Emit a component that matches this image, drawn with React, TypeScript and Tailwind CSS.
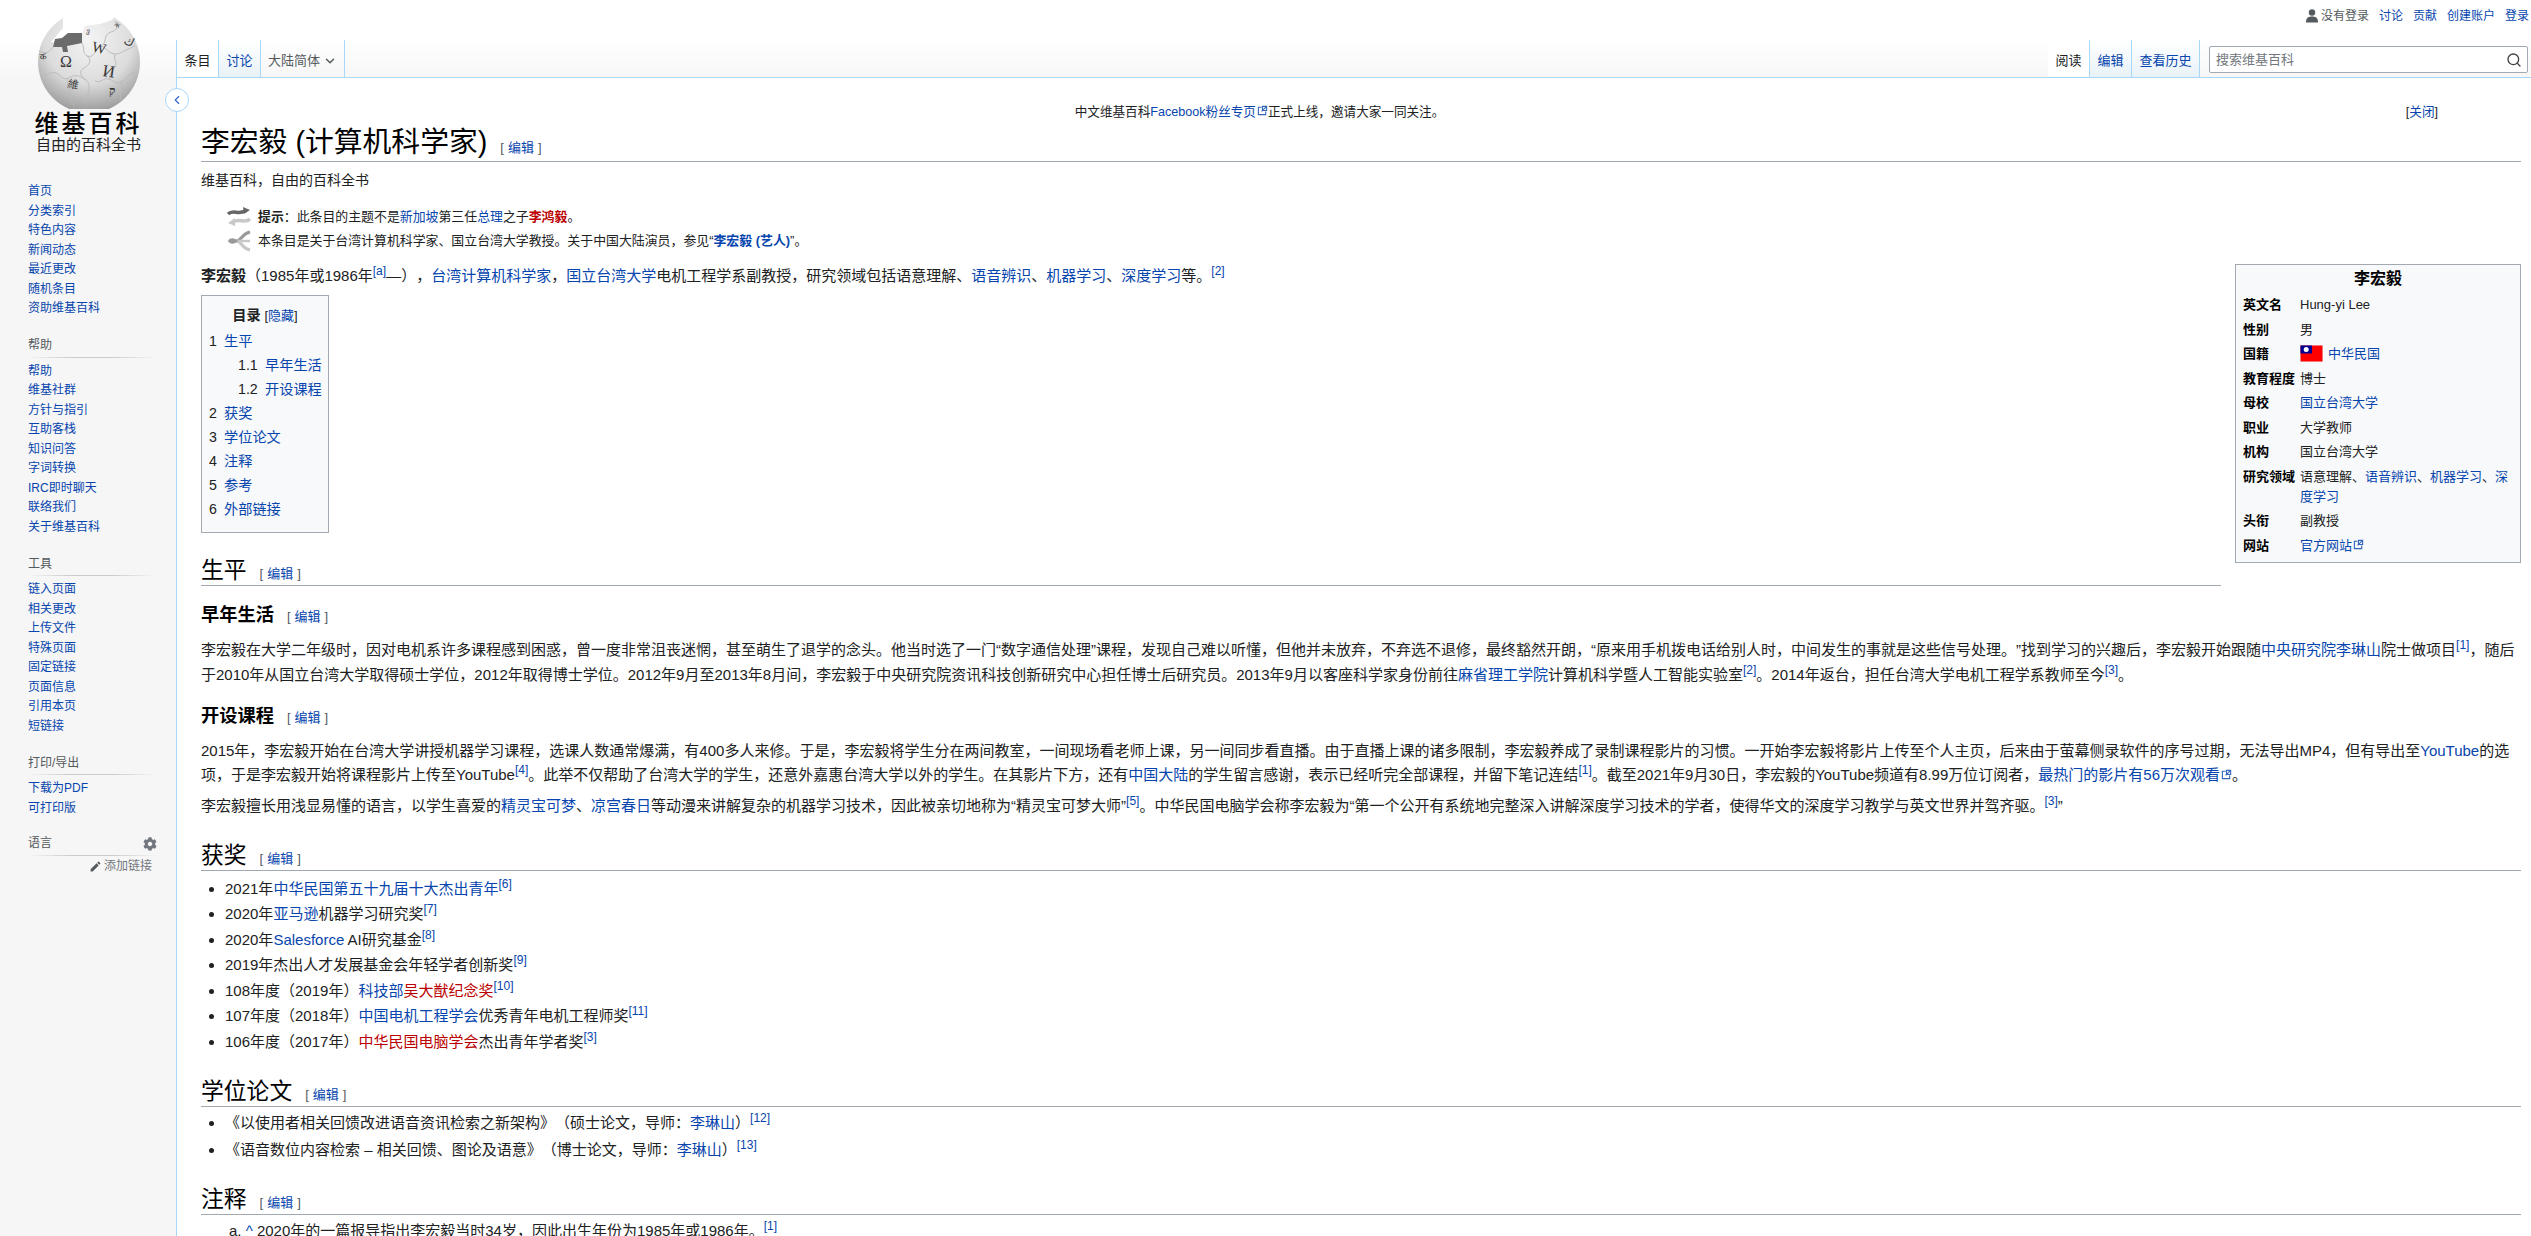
import { ChevronDown, ChevronLeft, Search } from 'lucide-react'
import { FaCog } from 'react-icons/fa'
import { MdEdit } from 'react-icons/md'
import type { ReactNode } from 'react'

const navGroups = [
  { title: '帮助', items: ['帮助', '维基社群', '方针与指引', '互助客栈', '知识问答', '字词转换', 'IRC即时聊天', '联络我们', '关于维基百科'] },
  { title: '工具', items: ['链入页面', '相关更改', '上传文件', '特殊页面', '固定链接', '页面信息', '引用本页', '短链接'] },
  { title: '打印/导出', items: ['下载为PDF', '可打印版'] },
]

const mainNav = ['首页', '分类索引', '特色内容', '新闻动态', '最近更改', '随机条目', '资助维基百科']

function A({ children }: { children: ReactNode }) {
  return <a className="text-[#0645ad]">{children}</a>
}

function Red({ children }: { children: ReactNode }) {
  return <a className="text-[#ba0000]">{children}</a>
}

function Ref({ n }: { n: string }) {
  return <sup className="text-[12px] text-[#0645ad]">[{n}]</sup>
}

function Ext() {
  return (
    <svg className="ml-px inline-block align-baseline" width="11" height="11" viewBox="0 0 12 12" fill="none" stroke="#36b" strokeWidth="1.2">
      <path d="M9.5 7v3.5h-8v-8H5" />
      <path d="M6 1.500h4.500V6H6z" fill="#fff" />
      <path d="M10 2 5 7" />
    </svg>
  )
}

function Edit() {
  return (
    <span className="ml-[13px] text-[13px] leading-none font-normal text-[#54595d]">
      <span className="mr-[4px]">[</span>
      <a className="text-[#0645ad]">编辑</a>
      <span className="ml-[4px]">]</span>
    </span>
  )
}

function H2({ children, className }: { children: ReactNode; className: string }) {
  return (
    <h2 className={`overflow-hidden border-b border-[#a2a9b1] text-[22.8px] leading-[30px] text-black ${className}`}>
      {children}
      <Edit />
    </h2>
  )
}

function H3({ children, className }: { children: ReactNode; className: string }) {
  return (
    <h3 className={`overflow-hidden text-[18.24px] leading-[26px] font-bold text-black ${className}`}>
      {children}
      <Edit />
    </h3>
  )
}

function Logo() {
  return (
    <div className="flex flex-col items-center pt-[15px] pl-[1px]">
      <svg width="104" height="94" viewBox="0 0 104 94">
        <defs>
          <radialGradient id="globe" cx="50%" cy="28%" r="72%">
            <stop offset="0%" stopColor="#f4f4f4" />
            <stop offset="60%" stopColor="#dcdcdc" />
            <stop offset="100%" stopColor="#9a9a9a" />
          </radialGradient>
        </defs>
        <circle cx="52" cy="47" r="51" fill="url(#globe)" />
        <path d="M26 -2 L80 -2 L75 5 L63 9 L48 11 L45 18 L31 18 L25 28 L14 27 L26 13 Z" fill="#fff" />
        <path d="M31 18 L45 18 L45 28 L30 31 L31 37 L26 37 L25 32 L16 32 L18 24 L25 23 Z" fill="#6b6b6b" />
        <g fill="none" stroke="#b9b9b9" strokeWidth="0.9">
          <path d="M2 36c6 3 10 2 14-4" />
          <path d="M45 28c3 6 0 10 5 13s3 9-3 12-3 9 2 12 4 12-2 24" />
          <path d="M3 60c8 1 10-4 16-2s6 8 12 5 10-4 18 2" />
          <path d="M50 41c8 3 8-8 14-10s2-12 10-14 6-6 4-11" />
          <path d="M64 31c6 2 8 8 14 8s10-4 20-8" />
          <path d="M58 66c6 3 8-4 14-2s6 6 12 3 8-8 14-10" />
          <path d="M78 39c-2 6 3 8 0 13s-6 6-5 12" />
          <path d="M31 63c-2 8 3 10 2 16s2 8 4 12" />
          <path d="M12 74c6 2 10 0 20 4" />
          <path d="M84 67c2 6-2 10 0 18" />
        </g>
        <g fontFamily="'Liberation Serif', 'Noto Sans CJK SC', serif" fill="#3a3a3a">
          <text x="23" y="52" fontSize="16">Ω</text>
          <text x="54" y="36" fontSize="15" transform="rotate(14 54 36)">W</text>
          <text x="65" y="61" fontSize="17" transform="rotate(8 65 61)">И</text>
          <text x="30" y="72" fontSize="11" transform="rotate(12 30 72)">維</text>
          <text x="72" y="80" fontSize="12" fontWeight="bold">ק</text>
          <text x="86" y="28" fontSize="12" transform="rotate(25 86 28)">ك</text>
          <text x="3" y="45" fontSize="9" transform="rotate(-8 3 45)">क</text>
          <text x="77" y="10" fontSize="8" transform="rotate(35 77 10)">ж</text>
          <text x="49" y="18" fontSize="7" transform="rotate(12 49 18)">ვ</text>
        </g>
      </svg>
      <div className="mt-[2px] font-['Liberation_Serif','Noto_Sans_CJK_SC',serif] text-[24px] leading-[26px] font-medium tracking-[3px] text-black">维基百科</div>
      <div className="font-['Liberation_Serif','Noto_Sans_CJK_SC',serif] text-[15px] leading-[17px] text-[#222]">自由的百科全书</div>
    </div>
  )
}

function Sidebar() {
  return (
    <aside className="w-[176px] shrink-0 text-[12px]">
      <Logo />
      <ul className="mt-[28px] pl-[28px] leading-[19.5px] text-[#0645ad]">
        {mainNav.map((item) => (
          <li key={item}>{item}</li>
        ))}
      </ul>
      {navGroups.map((group) => (
        <div key={group.title} className="mt-[17.5px] pl-[28px]">
          <div className="mr-[20px] mb-[4px] bg-[linear-gradient(to_right,#f6f6f6,#c8ccd1_33%,#c8ccd1_66%,#f6f6f6)] bg-[length:100%_1px] bg-bottom bg-no-repeat pb-[2px] leading-[19.5px] text-[#54595d]">
            {group.title}
          </div>
          <ul className="leading-[19.5px] text-[#0645ad]">
            {group.items.map((item) => (
              <li key={item}>{item}</li>
            ))}
          </ul>
        </div>
      ))}
      <div className="mt-[16px] pl-[28px]">
        <div className="mr-[19px] flex items-center justify-between bg-[linear-gradient(to_right,#f6f6f6,#c8ccd1_33%,#c8ccd1_66%,#f6f6f6)] bg-[length:100%_1px] bg-bottom bg-no-repeat pb-[2px] leading-[19.5px] text-[#54595d]">
          语言
          <FaCog className="text-[14px] text-[#72777d]" />
        </div>
        <div className="mt-[1px] mr-[24px] flex items-center justify-end gap-[2px] leading-[19.5px] text-[#72777d]">
          <MdEdit className="text-[13px] text-[#54595d]" />
          添加链接
        </div>
      </div>
    </aside>
  )
}

function Tab({ children, active, wide }: { children: ReactNode; active?: boolean; wide?: string }) {
  return (
    <div
      className={`flex h-[37px] items-center border-r border-[#a7d7f9] pt-[4px] text-[13px] ${wide ?? 'w-[42px] justify-center'} ${
        active ? 'bg-white text-[#202122]' : 'bg-[linear-gradient(#fff,#e8f2f8)] text-[#0645ad]'
      }`}
    >
      {children}
    </div>
  )
}

function Header() {
  return (
    <div className="flex h-[78px] flex-col">
      <div className="flex h-[40px] items-start justify-end gap-[10px] pt-[7px] pr-[2px] text-[12px] leading-[18px] text-[#0645ad]">
        <span className="flex items-center gap-[3px] text-[#54595d]">
          <svg width="12" height="14" viewBox="0 0 12 14" fill="#54595d">
            <circle cx="6" cy="3.500" r="3.200" />
            <path d="M0 13.500c0-4 1.500-6 6-6s6 2 6 6z" />
          </svg>
          没有登录
        </span>
        <span>讨论</span>
        <span>贡献</span>
        <span>创建账户</span>
        <span>登录</span>
      </div>
      <div className="flex h-[38px] items-start justify-between border-b border-[#a7d7f9]">
        <div className="flex border-l border-[#a7d7f9]">
          <Tab active>条目</Tab>
          <Tab>讨论</Tab>
          <div className="flex h-[37px] w-[84px] items-center justify-center gap-[3px] border-r border-[#a7d7f9] bg-[linear-gradient(#fff,#f6f6f6)] pt-[4px] text-[13px] text-[#54595d]">
            大陆简体
            <ChevronDown className="h-[14px] w-[14px]" strokeWidth={2.5} />
          </div>
        </div>
        <div className="flex items-start">
          <Tab active>阅读</Tab>
          <Tab>编辑</Tab>
          <Tab wide="w-[68px] justify-center">查看历史</Tab>
          <div className="mt-[6px] mr-[3px] ml-[9px] flex h-[27px] w-[319px] items-center justify-between rounded-[2px] border border-[#a2a9b1] bg-white pr-[5px] pl-[6px] text-[13px] text-[#72777d]">
            搜索维基百科
            <Search className="h-[16px] w-[16px] text-[#404244]" strokeWidth={2} />
          </div>
        </div>
      </div>
    </div>
  )
}

function Hatnotes() {
  return (
    <div className="mt-[13px] pl-[57px] text-[12.9px] leading-[24px] text-[#202122]">
      <div className="relative">
        <svg className="absolute top-[1px] left-[-32px]" width="26" height="22" viewBox="0 0 26 22" fill="none">
          <path d="M2 8C7 3 12 9 19 5" stroke="#666" strokeWidth="3.500" />
          <path d="M17 1l7 3-6 4z" fill="#666" />
          <path d="M24 13C19 18 14 12 7 16" stroke="#c8c8c8" strokeWidth="3.500" />
          <path d="M9 12l-7 5 7 3z" fill="#c8c8c8" />
        </svg>
        <b>提示</b>：此条目的主题不是<A>新加坡</A>第三任<A>总理</A>之子<b><Red>李鸿毅</Red></b>。
      </div>
      <div className="relative">
        <svg className="absolute top-[0px] left-[-32px]" width="26" height="24" viewBox="0 0 26 24" fill="none">
          <path d="M10 12C16 12 15 5 24 3" stroke="#999" strokeWidth="3" />
          <path d="M10 12C16 12 15 19 24 21" stroke="#c8c8c8" strokeWidth="3" />
          <path d="M10 12h14" stroke="#c8c8c8" strokeWidth="2.500" />
          <path d="M2 12c2-4 7-3 10 0-3 3-8 4-10 0z" fill="#999" />
        </svg>
        本条目是关于台湾计算机科学家、国立台湾大学教授。关于中国大陆演员，参见“<A><b>李宏毅 (艺人)</b></A>”。
      </div>
    </div>
  )
}

function Toc() {
  const rows: [string, string, boolean][] = [
    ['1', '生平', false],
    ['1.1', '早年生活', true],
    ['1.2', '开设课程', true],
    ['2', '获奖', false],
    ['3', '学位论文', false],
    ['4', '注释', false],
    ['5', '参考', false],
    ['6', '外部链接', false],
  ]
  return (
    <div className="mt-[7px] w-[128px] border border-[#a2a9b1] bg-[#f8f9fa] pt-[7px] pb-[11px] pl-[7px] text-[14.2px] leading-[24px]">
      <div className="mb-[1px] pr-[7px] text-center text-[13px]">
        <b className="text-[14.2px] text-[#202122]">目录</b> <span className="text-[#202122]">[</span>
        <A>隐藏</A>
        <span className="text-[#202122]">]</span>
      </div>
      {rows.map(([num, name, sub]) => (
        <div key={num} className={`flex h-[24px] items-center whitespace-nowrap ${sub ? 'pl-[29px]' : ''}`}>
          <span className={`text-[#202122] ${sub ? 'w-[27px]' : 'w-[15px]'}`}>{num}</span>
          <A>{name}</A>
        </div>
      ))}
    </div>
  )
}

function Infobox() {
  const rows: [string, ReactNode][] = [
    ['英文名', 'Hung-yi Lee'],
    ['性别', '男'],
    [
      '国籍',
      <>
        <svg className="mr-[5px] inline-block align-[-4px]" width="23" height="17" viewBox="0 0 23 17">
          <rect width="23" height="17" fill="#fe0000" stroke="#eaecf0" />
          <rect x="0.5" y="0.5" width="11.500" height="8" fill="#000095" />
          <circle cx="6.200" cy="4.500" r="2.500" fill="#fff" />
        </svg>
        <A>中华民国</A>
      </>,
    ],
    ['教育程度', '博士'],
    ['母校', <A>国立台湾大学</A>],
    ['职业', '大学教师'],
    ['机构', '国立台湾大学'],
    [
      '研究领域',
      <>
        语意理解、<A>语音辨识</A>、<A>机器学习</A>、<A>深度学习</A>
      </>,
    ],
    ['头衔', '副教授'],
    [
      '网站',
      <>
        <A>官方网站</A>
        <Ext />
      </>,
    ],
  ]
  return (
    <div className="float-right mt-[11px] ml-[14px] w-[286px] border border-[#a2a9b1] bg-[#f8f9fa] px-[7px] pt-[2px] pb-[4px] text-[13px] leading-[20px] text-[#202122]">
      <div className="mb-[2px] text-center text-[16px] leading-[24px] font-bold text-black">李宏毅</div>
      <table className="w-full border-collapse">
        <tbody>
          {rows.map(([label, value]) => (
            <tr key={label}>
              <th className="w-[57px] py-[2.250px] text-left align-top font-bold whitespace-nowrap text-black">{label}</th>
              <td className="py-[2.250px] align-top">{value}</td>
            </tr>
          ))}
        </tbody>
      </table>
    </div>
  )
}

function Article() {
  return (
    <main className="min-w-0 flex-1 bg-white pr-[10px] pl-[24px] text-[15px] leading-[24.32px] text-[#202122]">
      <div className="relative mt-[22px] pr-[203px] text-center text-[12.6px] leading-[24px] text-[#202122]">
        中文维基百科<A>Facebook粉丝专页</A>
        <Ext />
        正式上线，邀请大家一同关注。
        <span className="absolute top-0 right-[83px]">
          [<A>关闭</A>]
        </span>
      </div>
      <h1 className="border-b border-[#a2a9b1] text-[28.8px] leading-[37px] text-black">
        李宏毅 (计算机科学家)
        <Edit />
      </h1>
      <p className="mt-[6px] text-[14px] leading-[24px]">维基百科，自由的百科全书</p>
      <Hatnotes />
      <Infobox />
      <p className="mt-[11px]">
        <b>李宏毅</b>（1985年或1986年<Ref n="a" />—），<A>台湾</A>
        <A>计算机科学家</A>，<A>国立台湾大学</A>电机工程学系副教授，研究领域包括语意理解、<A>语音辨识</A>、<A>机器学习</A>、<A>深度学习</A>等。
        <Ref n="2" />
      </p>
      <Toc />
      <H2 className="mt-[22px]">生平</H2>
      <H3 className="mt-[16px]">早年生活</H3>
      <p className="mt-[10px]">
        李宏毅在大学二年级时，因对电机系许多课程感到困惑，曾一度非常沮丧迷惘，甚至萌生了退学的念头。他当时选了一门“数字通信处理”课程，发现自己难以听懂，但他并未放弃，不弃选不退修，最终豁然开朗，“原来用手机拨电话给别人时，中间发生的事就是这些信号处理。”找到学习的兴趣后，李宏毅开始跟随<A>中央研究院</A>
        <A>李琳山</A>院士做项目
        <Ref n="1" />，随后于2010年从国立台湾大学取得硕士学位，2012年取得博士学位。2012年9月至2013年8月间，李宏毅于中央研究院资讯科技创新研究中心担任博士后研究员。2013年9月以客座科学家身份前往<A>麻省理工学院</A>计算机科学暨人工智能实验室
        <Ref n="2" />。2014年返台，担任台湾大学电机工程学系教师至今
        <Ref n="3" />。
      </p>
      <H3 className="mt-[16px]">开设课程</H3>
      <p className="mt-[10px]">
        2015年，李宏毅开始在台湾大学讲授机器学习课程，选课人数通常爆满，有400多人来修。于是，李宏毅将学生分在两间教室，一间现场看老师上课，另一间同步看直播。由于直播上课的诸多限制，李宏毅养成了录制课程影片的习惯。一开始李宏毅将影片上传至个人主页，后来由于萤幕侧录软件的序号过期，无法导出MP4，但有导出至<A>YouTube</A>的选项，于是李宏毅开始将课程影片上传至YouTube
        <Ref n="4" />。此举不仅帮助了台湾大学的学生，还意外嘉惠台湾大学以外的学生。在其影片下方，还有<A>中国大陆</A>的学生留言感谢，表示已经听完全部课程，并留下笔记连结
        <Ref n="1" />。截至2021年9月30日，李宏毅的YouTube频道有8.99万位订阅者，<A>最热门的影片有56万次观看</A>
        <Ext />。
      </p>
      <p className="mt-[6px]">
        李宏毅擅长用浅显易懂的语言，以学生喜爱的<A>精灵宝可梦</A>、<A>凉宫春日</A>等动漫来讲解复杂的机器学习技术，因此被亲切地称为“精灵宝可梦大师”
        <Ref n="5" />。中华民国电脑学会称李宏毅为“第一个公开有系统地完整深入讲解深度学习技术的学者，使得华文的深度学习教学与英文世界并驾齐驱。
        <Ref n="3" />”
      </p>
      <H2 className="mt-[22px]">获奖</H2>
      <ul className="mt-[5px] list-disc pl-[24px] leading-[25.5px]">
        <li>2021年<A>中华民国第五十九届十大杰出青年</A><Ref n="6" /></li>
        <li>2020年<A>亚马逊</A>机器学习研究奖<Ref n="7" /></li>
        <li>2020年<A>Salesforce</A> AI研究基金<Ref n="8" /></li>
        <li>2019年杰出人才发展基金会年轻学者创新奖<Ref n="9" /></li>
        <li>108年度（2019年）<A>科技部</A><Red>吴大猷纪念奖</Red><Ref n="10" /></li>
        <li>107年度（2018年）<A>中国电机工程学会</A>优秀青年电机工程师奖<Ref n="11" /></li>
        <li>106年度（2017年）<Red>中华民国电脑学会</Red>杰出青年学者奖<Ref n="3" /></li>
      </ul>
      <H2 className="mt-[22px]">学位论文</H2>
      <ul className="mt-[3px] list-disc pl-[24px] leading-[26.6px]">
        <li>《以使用者相关回馈改进语音资讯检索之新架构》（硕士论文，导师：<A>李琳山</A>）<Ref n="12" /></li>
        <li>《语音数位内容检索 – 相关回馈、图论及语意》（博士论文，导师：<A>李琳山</A>）<Ref n="13" /></li>
      </ul>
      <H2 className="mt-[20px]">注释</H2>
      <ol className="mt-[4px] pl-[28px]">
        <li>a. <A>^</A> 2020年的一篇报导指出李宏毅当时34岁，因此出生年份为1985年或1986年。<Ref n="1" /></li>
      </ol>
    </main>
  )
}

export default function App() {
  return (
    <div className="relative flex h-screen overflow-hidden bg-[linear-gradient(#fff_40px,#f6f6f6_80px)] font-['Liberation_Sans','Noto_Sans_CJK_SC',sans-serif] [text-spacing-trim:space-all]">
      <Sidebar />
      <div className="flex min-w-0 flex-1 flex-col">
        <Header />
        <div className="flex flex-1 overflow-hidden border-l border-[#a7d7f9]">
          <Article />
        </div>
      </div>
      <button className="absolute top-[88px] left-[165px] flex h-[24px] w-[24px] items-center justify-center rounded-full border border-[#a7d7f9] bg-white text-[#36c]">
        <ChevronLeft className="h-[14px] w-[14px]" />
      </button>
    </div>
  )
}
